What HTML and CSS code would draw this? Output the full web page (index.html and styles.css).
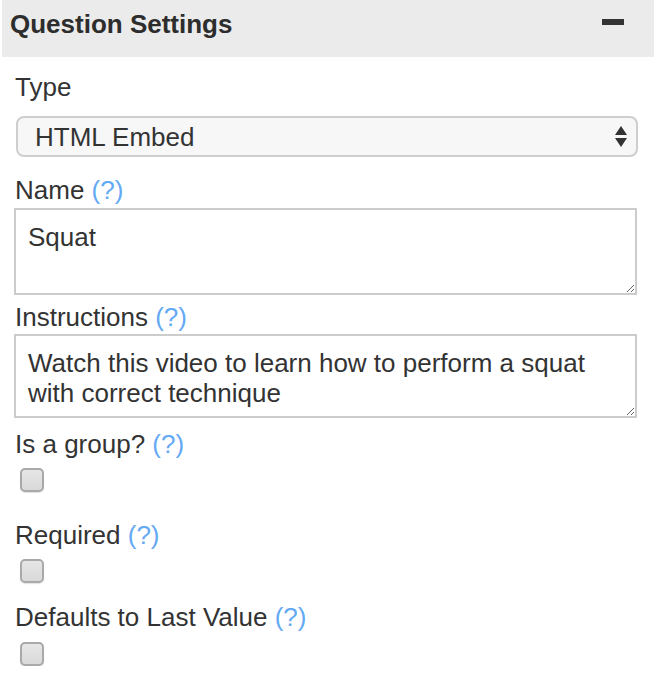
FILE: index.html
```
<!DOCTYPE html>
<html lang="en">
<head>
    <meta charset="UTF-8">
    <meta name="viewport" content="width=device-width, initial-scale=1.0">
    <title>Question Settings</title>
    <link rel="stylesheet" href="styles.css">
</head>
<body>
    <div class="panel">
        <div class="panel-head">
            <h2>Question Settings</h2>
            <span class="collapse" title="Collapse"></span>
        </div>
        <div class="panel-body">
            <div class="field field-select">
                <label>Type</label>
                <div class="select">
                    <span>HTML Embed</span>
                    <svg class="arrows" width="12" height="21" viewBox="0 0 12 21">
                        <path d="M6 0 L12 9 L0 9 Z" fill="#333"/>
                        <path d="M0 12 L12 12 L6 21 Z" fill="#333"/>
                    </svg>
                </div>
            </div>
            <div class="field field-text">
                <label>Name <a class="help" href="#">(?)</a></label>
                <textarea class="name-input">Squat</textarea>
            </div>
            <div class="field field-text field-short">
                <label>Instructions <a class="help" href="#">(?)</a></label>
                <textarea class="instructions-input">Watch this video to learn how to perform a squat with correct technique</textarea>
            </div>
            <div class="field field-check">
                <label>Is a group? <a class="help" href="#">(?)</a></label>
                <input type="checkbox">
            </div>
            <div class="field field-check field-wide">
                <label>Required <a class="help" href="#">(?)</a></label>
                <input type="checkbox">
            </div>
            <div class="field field-check">
                <label>Defaults to Last Value <a class="help" href="#">(?)</a></label>
                <input type="checkbox">
            </div>
        </div>
    </div>
</body>
</html>
```
FILE: styles.css
```
body {
    margin: 0;
    font-family: "Liberation Sans", Arial, Helvetica, sans-serif;
    color: #333;
    background: #fff;
}
.panel-head {
    display: flex;
    justify-content: space-between;
    align-items: flex-start;
    height: 57px;
    box-sizing: border-box;
    margin-left: 2px;
    padding: 9px 30px 0 8px;
    background: #ebebeb;
}
.panel-head h2 {
    margin: 0;
    font-size: 26px;
    line-height: 30px;
    font-weight: bold;
    color: #2d2d2d;
}
.collapse {
    display: block;
    width: 22px;
    height: 6px;
    margin-top: 10px;
    background: #333;
}
.panel-body {
    padding: 15px 17px 0 14px;
}
.field {
    display: flex;
    flex-direction: column;
    align-items: flex-start;
}
.field label {
    padding-left: 1px;
    font-size: 26px;
    line-height: 30px;
}
.help {
    color: #63a9f4;
    text-decoration: none;
}
.select {
    display: flex;
    align-items: center;
    justify-content: space-between;
    align-self: stretch;
    height: 41px;
    box-sizing: border-box;
    margin: 14px -1px 0 2px;
    padding: 0 9px 0 17px;
    border: 2px solid #cecece;
    border-radius: 8px;
    background: #f7f7f7;
    font-size: 26px;
    line-height: 30px;
}
.field-text {
    margin-top: 18px;
}
.field-short {
    margin-top: 7px;
}
textarea {
    align-self: stretch;
    box-sizing: border-box;
    margin: 3px 0 0 0;
    padding: 12px 12px 0 12px;
    border: 2px solid #cccccc;
    border-radius: 0;
    font-family: inherit;
    font-size: 26px;
    line-height: 30px;
    color: #333;
    resize: vertical;
}
textarea:focus {
    outline: none;
}
.name-input {
    height: 87px;
}
.instructions-input {
    height: 84px;
    margin-top: 2px;
}
.field-check {
    margin-top: 19px;
}
.field-text + .field-check {
    margin-top: 11px;
}
.field-wide {
    margin-top: 28px;
}
.field-check input {
    appearance: none;
    -webkit-appearance: none;
    width: 24px;
    height: 24px;
    margin: 9px 0 0 6px;
    box-sizing: border-box;
    border: 2px solid #a9a9a9;
    border-radius: 5px;
    background: linear-gradient(#e6e6e6, #d9d9d9);
    box-shadow: 0 1px 1px rgba(0, 0, 0, 0.12);
}
.field-check + .field-check.field-wide ~ .field-check input {
    margin-top: 10px;
}
```
